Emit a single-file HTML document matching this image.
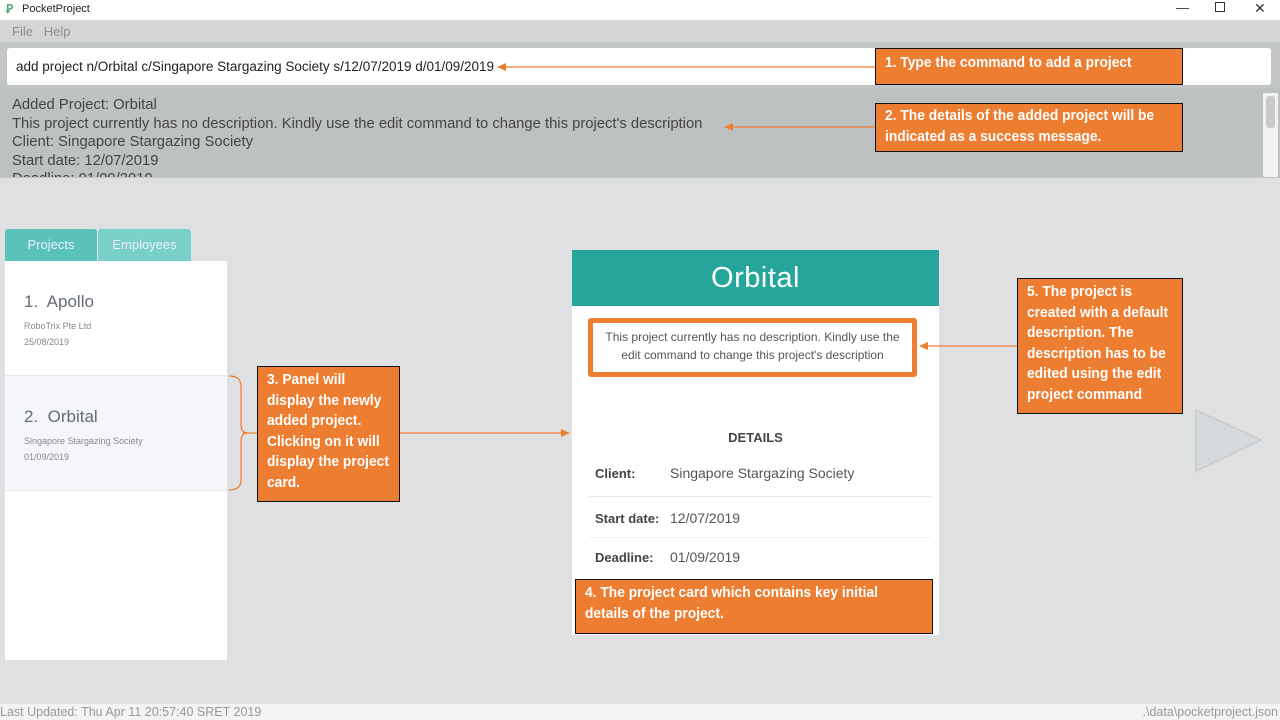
<!DOCTYPE html>
<html><head><meta charset="utf-8"><style>
*{margin:0;padding:0;box-sizing:border-box}
body{width:1280px;height:720px;overflow:hidden;background:#dfe0e2;font-family:"Liberation Sans",sans-serif;position:relative}
.a{position:absolute}
.co{position:absolute;background:#ed7d31;border:1.5px solid #111;color:#fff;font-weight:bold;font-size:15px;line-height:20.5px;padding:3px 9px;overflow:hidden}
.co div{transform:scaleX(0.92);transform-origin:left top;white-space:nowrap}
</style></head><body>
<div class="a" style="left:0;top:0;width:1280px;height:20px;background:#fff"></div>
<div class="a" style="left:6px;top:2px;font-size:12px;color:#5a7;font-weight:bold">Ꝑ</div>
<div class="a" style="left:22px;top:3px;font-size:11px;color:#222">PocketProject</div>
<div class="a" style="left:1176px;top:0px;font-size:13px;color:#333">—</div>
<div class="a" style="left:1215px;top:2px;width:10px;height:10px;border:1px solid #333"></div>
<div class="a" style="left:1254px;top:0px;font-size:14px;color:#333">✕</div>
<div class="a" style="left:0;top:20px;width:1280px;height:22px;background:#d3d5d7"></div>
<div class="a" style="left:12px;top:24px;font-size:13px;color:#8a8c90">File&nbsp;&nbsp;&nbsp;Help</div>
<div class="a" style="left:0;top:42px;width:1280px;height:136px;background:#c3c6c7"></div>
<div class="a" style="left:7px;top:48px;width:1264px;height:37px;background:#fff;border-radius:3px"></div>
<div class="a" style="left:16px;top:59px;font-size:13.5px;color:#222">add project n/Orbital c/Singapore Stargazing Society s/12/07/2019 d/01/09/2019</div>
<div class="a" style="left:0;top:88px;width:1280px;height:89px;background:#bec1c2;overflow:hidden">
<div style="position:absolute;left:12px;top:8px;font-size:14.8px;line-height:18.5px;color:#444">Added Project: Orbital<br>This project currently has no description. Kindly use the edit command to change this project's description<br>Client: Singapore Stargazing Society<br>Start date: 12/07/2019<br>Deadline: 01/09/2019</div></div>
<div class="a" style="left:1263px;top:93px;width:15px;height:84px;background:#f0f2f4;border-radius:2px"></div>
<div class="a" style="left:1266px;top:96px;width:9px;height:32px;background:#c8cacc;border-radius:3px"></div>

<div class="a" style="left:5px;top:229px;width:92px;height:32px;background:#5bc2b9;border-radius:3px 3px 0 0;color:#eef;font-size:13px;text-align:center;line-height:31px">Projects</div>
<div class="a" style="left:98px;top:229px;width:93px;height:32px;background:#79d0c8;border-radius:3px 3px 0 0;color:#eef;font-size:13px;text-align:center;line-height:31px">Employees</div>
<div class="a" style="left:5px;top:261px;width:222px;height:399px;background:#fff"></div>
<div class="a" style="left:5px;top:375px;width:222px;height:116px;background:#f4f6f9;border-top:1px solid #e6e8ea;border-bottom:1px solid #e6e8ea"></div>
<div class="a" style="left:24px;top:292px;font-size:17px;color:#666c74">1.&nbsp; Apollo</div>
<div class="a" style="left:24px;top:318px;font-size:9px;color:#888;line-height:16px">RoboTrix Pte Ltd<br>25/08/2019</div>
<div class="a" style="left:24px;top:407px;font-size:17px;color:#666c74">2.&nbsp; Orbital</div>
<div class="a" style="left:24px;top:433px;font-size:9px;color:#888;line-height:16px">Singapore Stargazing Society<br>01/09/2019</div>

<div class="a" style="left:572px;top:250px;width:367px;height:385px;background:#fff"></div>
<div class="a" style="left:572px;top:250px;width:367px;height:56px;background:#26a69a;color:#fff;font-size:29px;text-align:center;line-height:56px;letter-spacing:0.5px">Orbital</div>
<div class="a" style="left:588px;top:318px;width:329px;height:59px;border:5px solid #ed7d31;border-radius:3px;background:#fff;color:#555;font-size:12px;line-height:18px;text-align:center;padding-top:5px">This project currently has no description. Kindly use the<br>edit command to change this project's description</div>
<div class="a" style="left:572px;top:430px;width:367px;text-align:center;font-size:13px;font-weight:bold;color:#444">DETAILS</div>
<div class="a" style="left:595px;top:466px;font-size:13px;font-weight:bold;color:#444">Client:</div>
<div class="a" style="left:670px;top:465px;font-size:14px;color:#555">Singapore Stargazing Society</div>
<div class="a" style="left:589px;top:496px;width:342px;height:1px;background:#e6e8ec"></div>
<div class="a" style="left:595px;top:511px;font-size:13px;font-weight:bold;color:#444">Start date:</div>
<div class="a" style="left:670px;top:510px;font-size:14px;color:#555">12/07/2019</div>
<div class="a" style="left:589px;top:537px;width:342px;height:1px;background:#eef0f2"></div>
<div class="a" style="left:595px;top:550px;font-size:13px;font-weight:bold;color:#444">Deadline:</div>
<div class="a" style="left:670px;top:549px;font-size:14px;color:#555">01/09/2019</div>

<div class="a" style="left:0;top:703px;width:1280px;height:17px;background:#f3f3f3;border-top:1px solid #e4e4e4"></div>
<div class="a" style="left:0;top:705px;font-size:12.5px;color:#999">Last Updated: Thu Apr 11 20:57:40 SRET 2019</div>
<div class="a" style="right:2px;top:705px;font-size:12.5px;color:#999">.\data\pocketproject.json</div>

<svg class="a" style="left:0;top:0" width="1280" height="720">
<g stroke="#ed7d31" stroke-width="1.2" fill="none">
<line x1="504" y1="67" x2="875" y2="67"/><line x1="731" y1="127" x2="875" y2="127"/>
<line x1="926" y1="346" x2="1017" y2="346"/><line x1="243" y1="433" x2="563" y2="433"/>
<path d="M229 376 Q241 376 241 386 L241 425 Q241 433 248 433 Q241 433 241 441 L241 480 Q241 490 229 490"/>
</g>
<g fill="#ed7d31"><path d="M497 67 L506 63 L506 71Z"/><path d="M724 127 L733 123 L733 131Z"/><path d="M919 346 L928 342 L928 350Z"/><path d="M570 433 L561 429 L561 437Z"/></g>
<path d="M1196 410 L1261 440 L1196 471Z" fill="#d6d9db" stroke="#c8cacc" stroke-width="1.5"/>
</svg>
<div class="co" style="left:875px;top:48px;width:308px;height:37px;padding-top:4px"><div>1. Type the command to add a project</div></div>
<div class="co" style="left:875px;top:103px;width:308px;height:49px;padding-top:2px"><div>2. The details of the added project will be<br>indicated as a success message.</div></div>
<div class="co" style="left:257px;top:366px;width:143px;height:136px;padding-top:3px"><div>3. Panel will<br>display the newly<br>added project.<br>Clicking on it will<br>display the project<br>card.</div></div>
<div class="co" style="left:575px;top:579px;width:358px;height:55px;padding-top:3px"><div>4. The project card which contains key initial<br>details of the project.</div></div>
<div class="co" style="left:1017px;top:278px;width:166px;height:136px;padding-top:3px"><div>5. The project is<br>created with a default<br>description. The<br>description has to be<br>edited using the edit<br>project command</div></div>
</body></html>
